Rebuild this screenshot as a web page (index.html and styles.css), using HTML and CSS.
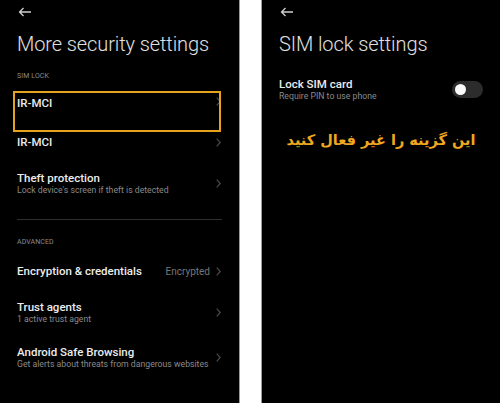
FILE: index.html
```html
<!DOCTYPE html>
<html lang="en">
<head>
<meta charset="utf-8">
<link rel="stylesheet" href="styles.css">
</head>
<body>
<div class="screens">
  <section class="screen left">
    <div class="topbar">
      <svg class="back" width="14" height="10" viewBox="0 0 14 10"><path d="M13 5H1.5M5.5 1L1.5 5l4 4" fill="none" stroke="#d0d0d0" stroke-width="1.3"/></svg>
    </div>
    <h1 class="title">More security settings</h1>
    <div class="label sim">SIM LOCK</div>
    <div class="row single highlighted">
      <div class="text"><div class="name">IR-MCI</div></div>
      <svg class="chev" width="5" height="9" viewBox="0 0 5 9"><path d="M0.7 0.7L4.2 4.5L0.7 8.3" fill="none" stroke="#4a4a4a" stroke-width="1.2"/></svg>
    </div>
    <div class="row single">
      <div class="text"><div class="name">IR-MCI</div></div>
      <svg class="chev" width="5" height="9" viewBox="0 0 5 9"><path d="M0.7 0.7L4.2 4.5L0.7 8.3" fill="none" stroke="#4a4a4a" stroke-width="1.2"/></svg>
    </div>
    <div class="row double">
      <div class="text"><div class="name">Theft protection</div><div class="sub">Lock device's screen if theft is detected</div></div>
      <svg class="chev" width="5" height="9" viewBox="0 0 5 9"><path d="M0.7 0.7L4.2 4.5L0.7 8.3" fill="none" stroke="#4a4a4a" stroke-width="1.2"/></svg>
    </div>
    <div class="divider"></div>
    <div class="label adv">ADVANCED</div>
    <div class="row single">
      <div class="text"><div class="name">Encryption &amp; credentials</div></div>
      <span class="value">Encrypted</span>
      <svg class="chev" width="5" height="9" viewBox="0 0 5 9"><path d="M0.7 0.7L4.2 4.5L0.7 8.3" fill="none" stroke="#4a4a4a" stroke-width="1.2"/></svg>
    </div>
    <div class="row double">
      <div class="text"><div class="name">Trust agents</div><div class="sub">1 active trust agent</div></div>
      <svg class="chev" width="5" height="9" viewBox="0 0 5 9"><path d="M0.7 0.7L4.2 4.5L0.7 8.3" fill="none" stroke="#4a4a4a" stroke-width="1.2"/></svg>
    </div>
    <div class="row double">
      <div class="text"><div class="name">Android Safe Browsing</div><div class="sub">Get alerts about threats from dangerous websites</div></div>
      <svg class="chev" width="5" height="9" viewBox="0 0 5 9"><path d="M0.7 0.7L4.2 4.5L0.7 8.3" fill="none" stroke="#4a4a4a" stroke-width="1.2"/></svg>
    </div>
  </section>
  <div class="gap"></div>
  <section class="screen right">
    <div class="topbar">
      <svg class="back" width="14" height="10" viewBox="0 0 14 10"><path d="M13 5H1.5M5.5 1L1.5 5l4 4" fill="none" stroke="#d0d0d0" stroke-width="1.3"/></svg>
    </div>
    <h1 class="title">SIM lock settings</h1>
    <div class="row double toggle-row">
      <div class="text"><div class="name">Lock SIM card</div><div class="sub">Require PIN to use phone</div></div>
      <div class="toggle"><span class="knob"></span></div>
    </div>
    <p class="note" dir="rtl" lang="fa">این گزینه را غیر فعال کنید</p>
  </section>
</div>
</body>
</html>
```

FILE: styles.css
```css
* { box-sizing: border-box; }
html, body { margin: 0; padding: 0; background: #000; }
body { font-family: Roboto, "Noto Sans", sans-serif; color: #e6e6e6; }

.screens { display: flex; width: 500px; height: 403px; overflow: hidden; }

.screen { background: #000; display: flex; flex-direction: column; }
.screen.left { width: 239px; padding: 0 17px; }
.screen.right { width: 238px; padding: 0 17px 0 17px; }

.gap { width: 23px; background: #fff; border-left: 1px solid #9a9a9a; border-right: 1px solid #9a9a9a; }

.topbar { height: 24px; display: flex; align-items: flex-end; padding-left: 1px; }
.back { display: block; margin-bottom: 7px; }

.title {
  margin: 0;
  height: 40px;
  display: flex;
  align-items: center;
  font-size: 20px;
  font-weight: 300;
  color: #e0e0e0;
  letter-spacing: -0.1px;
  white-space: nowrap;
}

.label { height: 21px; display: flex; align-items: center; font-size: 7px; color: #8c8c8c; letter-spacing: 0.1px; }
.label.sim { padding-top: 3px; }
.label.adv { height: 32px; padding-top: 12px; }

.row { display: flex; align-items: center; position: relative; }
.row.single { height: 38px; }
.row.double { height: 45px; }
.row .text { flex: 1; min-width: 0; }
.name { font-size: 11.5px; font-weight: 500; color: #ececec; white-space: nowrap; line-height: 13px; }
.sub { font-size: 8.7px; color: #8a8a8a; white-space: nowrap; line-height: 11px; }
.value { font-size: 10px; color: #777; margin-right: 6px; }
.chev { display: block; margin-right: 1px; flex: none; }

.row.single.highlighted { align-items: flex-start; padding-top: 12px; }
.row.highlighted::after {
  content: "";
  position: absolute;
  left: -4px; right: 1px; top: 6px; bottom: -9px;
  border: 2px solid #e6a41e;
}

.divider { height: 1px; background: #2e2e2e; margin: 13px 0 0; }

.toggle-row { margin-top: 3px; }
.toggle { width: 31px; height: 17px; border-radius: 9px; background: #2c2c2c; position: relative; flex: none; }
.knob { position: absolute; left: 3px; top: 3px; width: 11px; height: 11px; border-radius: 50%; background: #fafafa; }

.note {
  margin: 20px 0 0;
  text-align: center;
  font-family: "DejaVu Sans", sans-serif;
  font-weight: bold;
  font-size: 14.5px;
  color: #efa81f;
}
```
